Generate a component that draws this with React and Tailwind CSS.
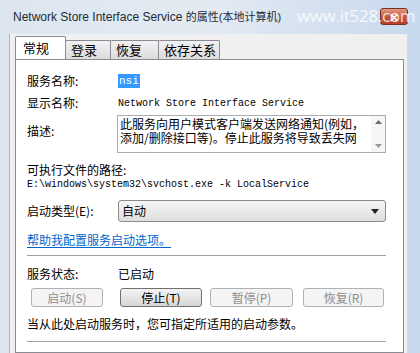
import React from "react";

const cjk = { fontFamily: '"Noto Sans CJK SC", "Noto Sans", sans-serif' };
const mono = { fontFamily: '"Liberation Mono", "Noto Sans CJK SC", monospace' };

function Tab({ label, active, w }) {
  if (active) {
    return (
      <div
        className={`h-[23px] ${w} border border-b-0 border-[#898c95] bg-white rounded-t-[2px] flex items-center pl-[7px] text-[13px] text-black relative z-10 -mb-px`}
      >
        {label}
      </div>
    );
  }
  return (
    <div
      className={`h-[19px] mt-[4px] ${w} border border-b-0 border-[#898c95] bg-gradient-to-b from-[#f2f2f2] to-[#dcdcdc] rounded-t-[2px] flex items-center pl-[5px] text-[13px] text-black whitespace-nowrap -ml-px`}
    >
      {label}
    </div>
  );
}

function Btn({ label, disabled, w, className = "" }) {
  return (
    <div
      className={`h-[19px] ${w} ${className} rounded-[3px] border flex items-center justify-center text-[12px] ${
        disabled
          ? "border-[#adb2b5] bg-[#f4f4f4] text-[#8d8d8d]"
          : "border-[#707070] bg-gradient-to-b from-[#f4f4f4] to-[#d6d6d6] text-black"
      }`}
    >
      {label}
    </div>
  );
}

export default function App() {
  return (
    <div className="w-[420px] h-[353px] overflow-hidden bg-gradient-to-r from-[#dde6ef] via-[#e3eaf2] to-[#c7d9ee] flex flex-col" style={cjk}>
      {/* title bar */}
      <div className="h-[34px] flex items-center pl-[13px] pr-[12px] relative">
        <span className="text-[12px] text-[#1e2a38]" style={{ fontFamily: '"Liberation Sans", "Noto Sans CJK SC", sans-serif' }}>
          Network Store Interface Service <span className="text-[11px]">的属性(本地计算机)</span>
        </span>
        <div className="ml-auto w-[28px] h-[17px] mt-[-1px] rounded-[3px] bg-gradient-to-b from-[#e19b85] via-[#c9523c] to-[#b8402a] border border-[#7a3426] flex items-center justify-center text-white text-[12px] font-bold leading-none">
          ✕
        </div>
        <div className="absolute left-[297px] top-[7px] text-[17px] text-white/80 leading-none whitespace-nowrap tracking-[-0.3px]" style={{ fontFamily: '"Open Sans", sans-serif' }}>
          www.it528.com
        </div>
      </div>

      {/* client area */}
      <div className="flex-1 ml-[9px] mr-[13px] bg-[#f0f0f0] border-l border-[#a9b7c6] pl-[5px] pr-[3px] pt-[2px] flex flex-col">
        <div className="flex items-start">
          <Tab label="常规" active w="w-[51px]" />
          <Tab label="登录" w="w-[46px]" />
          <Tab label="恢复" w="w-[49px]" />
          <Tab label="依存关系" w="w-[62px]" />
        </div>

        <div className="flex-1 bg-white border border-[#898c95] pl-[11px] pr-[17px] text-[12px] text-black">
          <div className="flex items-center h-[22px] mt-[10px]">
            <div className="w-[91px]">服务名称:</div>
            <span className="bg-[#3399ff] text-white text-[11px] px-[1px] leading-[14px]" style={mono}>nsi</span>
          </div>
          <div className="flex items-center h-[22px]">
            <div className="w-[91px]">显示名称:</div>
            <span className="text-[10px]" style={mono}>Network Store Interface Service</span>
          </div>
          <div className="flex mt-[1px]">
            <div className="w-[90px] pt-[7px]">描述:</div>
            <div className="flex-1 h-[38px] border border-[#abadb3] flex">
              <div className="flex-1 pl-[2px] pt-[1px] text-[12px] leading-[14px] text-black">
                此服务向用户模式客户端发送网络通知(例如，添加/删除接口等)。停止此服务将导致丢失网
              </div>
              <div className="w-[14px] flex flex-col justify-between items-center py-[4px] bg-[#f6f6f6]">
                <svg width="7" height="4" viewBox="0 0 7 4"><path d="M0 4 L3.5 0 L7 4Z" fill="#6c6c6c" /></svg>
                <svg width="7" height="4" viewBox="0 0 7 4"><path d="M0 0 L3.5 4 L7 0Z" fill="#9a9a9a" /></svg>
              </div>
            </div>
          </div>
          <div className="mt-[9px] leading-[16px]">可执行文件的路径:</div>
          <div className="text-[10px] leading-[14px]" style={mono}>E:\windows\system32\svchost.exe -k LocalService</div>
          <div className="flex items-center mt-[8px]">
            <div className="w-[91px]">启动类型(E):</div>
            <div className="flex-1 h-[22px] rounded-[3px] border border-[#8b8b8b] bg-gradient-to-b from-[#f5f5f5] to-[#dedede] flex items-center pl-[3px] pr-[6px]">
              <span className="text-[12px]">自动</span>
              <svg className="ml-auto" width="8" height="5" viewBox="0 0 8 5"><path d="M0 0 L8 0 L4 5Z" fill="#222" /></svg>
            </div>
          </div>
          <div className="mt-[10px] text-[#0066cc] underline underline-offset-2 leading-[16px]">帮助我配置服务启动选项。</div>
          <div className="mt-[7px] h-px bg-[#a0a0a0]" />
          <div className="flex items-center mt-[10px] leading-[16px]">
            <div className="w-[91px]">服务状态:</div>
            <div>已启动</div>
          </div>
          <div className="flex mt-[6px]">
            <Btn label="启动(S)" disabled w="w-[72px]" className="ml-[4px]" />
            <Btn label="停止(T)" w="w-[82px]" className="ml-[17px]" />
            <Btn label="暂停(P)" disabled w="w-[83px]" className="ml-[8px]" />
            <Btn label="恢复(R)" disabled w="w-[81px]" className="ml-[10px]" />
          </div>
          <div className="mt-[9px] leading-[16px]">当从此处启动服务时，您可指定所适用的启动参数。</div>
          <div className="mt-[9px] h-[10px] border-t border-[#a0a0a0]" />
        </div>
      </div>
    </div>
  );
}
